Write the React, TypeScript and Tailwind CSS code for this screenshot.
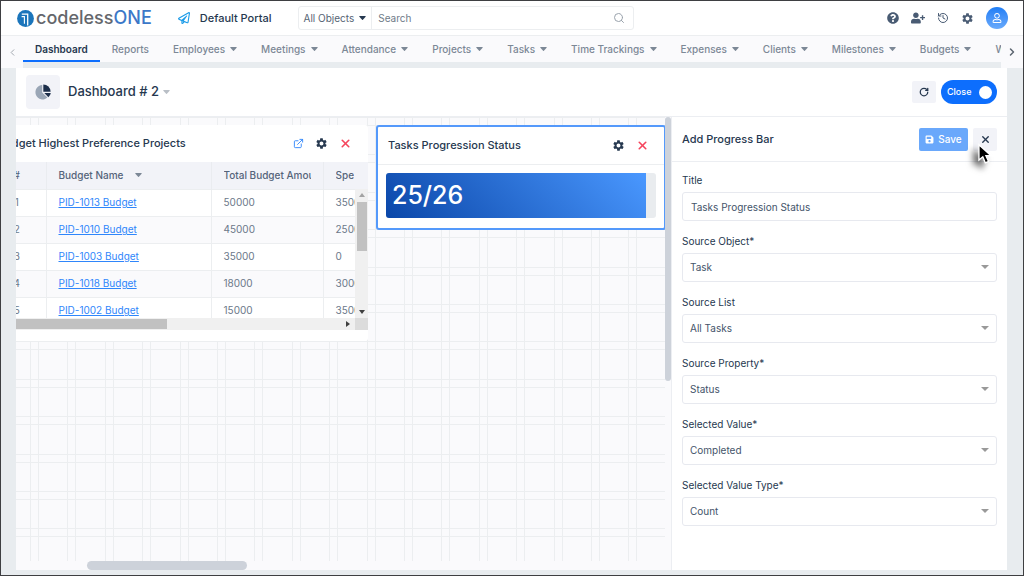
import { useState } from "react"
import type { ReactNode } from "react"
import { FaQuestionCircle, FaRegPaperPlane, FaRegUser, FaSave, FaUserPlus } from "react-icons/fa"
import { FiExternalLink } from "react-icons/fi"
import { MdSettings } from "react-icons/md"
import { ChevronLeft, ChevronRight, History, RotateCw, Search, X } from "lucide-react"

const tabs = [
    { name: "Reports", menu: false },
    { name: "Employees", menu: true },
    { name: "Meetings", menu: true },
    { name: "Attendance", menu: true },
    { name: "Projects", menu: true },
    { name: "Tasks", menu: true },
    { name: "Time Trackings", menu: true },
    { name: "Expenses", menu: true },
    { name: "Clients", menu: true },
    { name: "Milestones", menu: true },
    { name: "Budgets", menu: true },
    { name: "Work Logs", menu: true },
]

const budgets = [
    { name: "PID-1013 Budget", total: 50000, spent: 35000 },
    { name: "PID-1010 Budget", total: 45000, spent: 25000 },
    { name: "PID-1003 Budget", total: 35000, spent: 0 },
    { name: "PID-1018 Budget", total: 18000, spent: 30000 },
    { name: "PID-1002 Budget", total: 15000, spent: 35000 },
]

const selects = [
    { id: "sourceObject", label: "Source Object*", value: "Task" },
    { id: "sourceList", label: "Source List", value: "All Tasks" },
    { id: "sourceProperty", label: "Source Property*", value: "Status" },
    { id: "selectedValue", label: "Selected Value*", value: "Completed" },
    { id: "valueType", label: "Selected Value Type*", value: "Count" },
]

function Caret({ className = "" }: { className?: string }) {
    return (
        <svg viewBox="0 0 7 4" className={`h-1 w-[7px] shrink-0 ${className}`}>
            <path d="M0.6 0H6.4Q7 0.2 6.6 0.7L3.9 3.7Q3.5 4.1 3.1 3.7L0.4 0.7Q0 0.2 0.6 0Z" fill="currentColor" />
        </svg>
    )
}

function Logo() {
    return (
        <a href="#" className="flex items-center gap-0.5" aria-label="codelessONE">
            <svg viewBox="0 0 17 17" className="h-[17px] w-[17px]">
                <circle cx="8.5" cy="8.5" r="8.4" fill="#1b75bb" />
                <path d="M4.6 6.6H7.4V13.8" fill="none" stroke="#fff" strokeWidth="1.1" />
                <path d="M4.8 4.2H10.7V15.4" fill="none" stroke="#fff" strokeWidth="1.3" />
            </svg>
            <span className="text-[18px] font-medium leading-5 text-[#65676c]">codeless<span className="text-[#3c78c8]">ONE</span></span>
        </a>
    )
}

function Header() {
    return (
        <header className="flex h-[35px] items-center border-b border-[#eceef0] bg-white pl-4 pr-[15px]">
            <Logo />
            <div className="ml-[26px] flex items-center gap-2.5 text-[11px] font-medium text-[#26384f]">
                <FaRegPaperPlane size={12} className="text-[#1b9be8]" />
                Default Portal
            </div>
            <form className="ml-[26px] flex h-6 w-[336px] items-center rounded-[3px] border border-[#eceef0]">
                <button type="button" className="flex h-full items-center gap-[5px] border-r border-[#eceef0] px-[5px] text-[10px] text-[#566474]">
                    All Objects <Caret className="text-[#26384f]" />
                </button>
                <input aria-label="Search" placeholder="Search" className="min-w-0 flex-1 px-1.5 text-[10px] outline-none placeholder:text-[#6f7b88]" />
                <Search size={12} className="mr-2 text-[#9aa3ad]" />
            </form>
            <div className="ml-auto flex items-center gap-3 text-[#495b73]">
                <button aria-label="Help"><FaQuestionCircle size={12} /></button>
                <button aria-label="Invite"><FaUserPlus size={14} /></button>
                <button aria-label="History"><History size={12} /></button>
                <button aria-label="Settings"><MdSettings size={13} /></button>
                <button aria-label="Account" className="flex h-[22px] w-[22px] items-center justify-center rounded-full bg-linear-to-b from-[#1d7df5] to-[#69aafb] text-white">
                    <FaRegUser size={10} />
                </button>
            </div>
        </header>
    )
}

function TabBar() {
    return (
        <nav className="flex h-8 bg-[#fafafc]">
            <button aria-label="Scroll left" className="flex w-[22px] shrink-0 items-center justify-center text-[#9aa1a9]"><ChevronLeft size={11} /></button>
            <div className="min-w-0 flex-1 overflow-hidden bg-[#e8ecef]">
                <div className="flex h-[26px] bg-[#fafafc] text-[10px] font-medium text-[#7c8896]">
                    <a href="#" className="flex items-center border-b-2 border-[#0d6efd] px-3 pt-0.5 font-semibold text-[#26384f]">Dashboard</a>
                    {tabs.map((tab) => (
                        <a href="#" key={tab.name} className="flex shrink-0 items-center gap-[5px] whitespace-nowrap px-3">
                            {tab.name}
                            {tab.menu && <Caret />}
                        </a>
                    ))}
                </div>
            </div>
            <button aria-label="Scroll right" className="flex w-[22px] shrink-0 items-center justify-center text-[#5c6570]"><ChevronRight size={12} strokeWidth={3} /></button>
        </nav>
    )
}

function DashboardBar() {
    const [editing, setEditing] = useState(true)

    return (
        <div className="flex h-[49px] shrink-0 items-center border-b border-[#eceef2] bg-white px-2.5">
            <div className="flex h-[34px] w-[34px] items-center justify-center rounded-[4px] bg-[#f2f3f8]">
                <svg viewBox="0 0 16 16" className="h-4 w-4">
                    <path d="M7.2 1A7.2 7.2 0 1 0 12.4 13.6L7.2 8.4Z" fill="#9aa6b6" />
                    <path d="M8.3 0.4A7.4 7.4 0 0 1 15.6 7.7H8.3Z" fill="#1d2f4b" />
                    <path d="M9.3 9H15.8A7 7 0 0 1 13.4 13.2Z" fill="#1d2f4b" />
                </svg>
            </div>
            <button className="ml-2 flex items-center gap-1 text-[13px] font-medium text-[#26384f]">
                Dashboard # 2 <Caret className="text-[#b9bfc6]" />
            </button>
            <button aria-label="Refresh" className="ml-auto flex h-[22px] w-6 items-center justify-center rounded-[2px] bg-[#f2f3f8] text-[#26384f]"><RotateCw size={10} strokeWidth={3} /></button>
            <label className="ml-[5px] flex h-6 w-14 cursor-pointer items-center justify-between rounded-full bg-[#0d6efd] pl-1.5 pr-[5px] text-[9px] font-medium text-white">
                Close
                <input type="checkbox" checked={editing} onChange={() => setEditing(!editing)} className="h-[13px] w-[13px] appearance-none rounded-full bg-white" />
            </label>
        </div>
    )
}

// double lines where the margins of neighbouring grid cells meet
function CanvasGrid() {
    const starts = Array.from({ length: 60 }, (_, i) => Math.round((i * 187) / 5))

    return (
        <svg className="absolute inset-0 h-full w-full" stroke="#eceef0" shapeRendering="crispEdges">
            {starts.map((s) => (
                <g key={s}>
                    <path d={`M${s + 14.5} 0V4000M${s + 22.5} 0V4000`} />
                    <path d={`M0 ${s + 0.5}H4000M0 ${s + 8.5}H4000`} />
                </g>
            ))}
        </svg>
    )
}

function CardHeader({ title, children }: { title: string; children: ReactNode }) {
    return (
        <div className="flex h-[37px] items-center justify-between pl-2.5 text-[#26384f]">
            <h2 className="text-[11px] font-medium">{title}</h2>
            <div className="flex items-center gap-[11px]">{children}</div>
        </div>
    )
}

function BudgetCard() {
    return (
        <section className="relative h-[216px] w-[380px] shrink-0 overflow-hidden rounded-[3px] bg-white">
            <div className="pr-4">
                <CardHeader title="Budget Highest Preference Projects">
                    <button aria-label="Open" className="text-[#2f86fb]"><FiExternalLink size={11} /></button>
                    <button aria-label="Configure"><MdSettings size={13} /></button>
                    <button aria-label="Remove" className="text-[#f5455c]"><X size={13} strokeWidth={3} /></button>
                </CardHeader>
            </div>
            <div className="h-[156px] overflow-hidden bg-[#f2f3f8]">
                <table className="w-[460px] table-fixed border-collapse text-[10px] text-[#6b7889]">
                    <colgroup>
                        <col className="w-[58px]" />
                        <col className="w-[165px]" />
                        <col className="w-[112px]" />
                        <col />
                    </colgroup>
                    <thead>
                        <tr className="h-[27px] bg-[#f2f3f8] text-left text-[#55647a]">
                            <th className="border-r border-[#eaecf0] text-center font-medium">#</th>
                            <th className="border-r border-[#eaecf0] px-3 font-medium">
                                <span className="flex items-center gap-3">Budget Name <Caret className="text-[#7c8896]" /></span>
                            </th>
                            <th className="border-r border-[#eaecf0] px-3 font-medium"><div className="overflow-hidden whitespace-nowrap">Total Budget Amount</div></th>
                            <th className="px-3 font-medium"><div className="w-[18px] overflow-hidden">Spent</div></th>
                        </tr>
                    </thead>
                    <tbody>
                        {budgets.map((b, i) => (
                            <tr key={b.name} className="h-[27px] border-t border-[#eceef0] bg-white even:bg-[#fafafc]">
                                <td className="border-r border-[#eceef0] text-center">{i + 1}</td>
                                <td className="border-r border-[#eceef0] px-3"><a href="#" className="text-[#2f86fb] underline">{b.name}</a></td>
                                <td className="border-r border-[#eceef0] px-3">{b.total}</td>
                                <td className="px-3">{b.spent}</td>
                            </tr>
                        ))}
                    </tbody>
                </table>
            </div>
            <div className="flex h-3 bg-[#f0f0f0]">
                <div className="my-px w-[179px] bg-[#c1c1c1]" />
                <div className="ml-auto flex w-3 items-center justify-center text-[#404040]">
                    <svg viewBox="0 0 4 6" className="h-1.5 w-1"><path d="M0 0L4 3L0 6Z" fill="currentColor" /></svg>
                </div>
                <div className="ml-px w-[13px] bg-[#dcdcdc]" />
            </div>
            <div className="absolute right-0 top-16 flex h-[129px] w-[13px] flex-col items-center bg-[#f0f0f0] py-1">
                <svg viewBox="0 0 6 4" className="h-1 w-1.5"><path d="M0 4L3 0L6 4Z" fill="#a3a3a3" /></svg>
                <div className="mt-[5px] h-[49px] w-2.5 bg-[#c1c1c1]" />
                <svg viewBox="0 0 6 4" className="mt-auto h-1 w-1.5"><path d="M0 0L3 4L6 0Z" fill="#404040" /></svg>
            </div>
        </section>
    )
}

function ProgressCard({ title, done, total }: { title: string; done: number; total: number }) {
    return (
        <section className="h-[105px] w-[290px] shrink-0 rounded-[3px] border-2 border-[#5499fb] bg-white">
            <div className="border-b border-[#eceef0] pr-[15px]">
                <CardHeader title={title}>
                    <button aria-label="Configure"><MdSettings size={13} /></button>
                    <button aria-label="Remove" className="text-[#f5455c]"><X size={13} strokeWidth={3} /></button>
                </CardHeader>
            </div>
            <div className="px-2 pt-2">
                <div role="progressbar" aria-valuenow={done} aria-valuemax={total} className="h-[45px] overflow-hidden rounded-[3px] bg-[#e9ecef]">
                    <div
                        className="flex h-full items-center bg-linear-45 from-[#0a47a9] to-[#4a98ff] pl-1.5 text-[25px] font-medium text-white"
                        style={{ width: `${(done / total) * 100}%` }}
                    >
                        {done}/{total}
                    </div>
                </div>
            </div>
        </section>
    )
}

function Canvas({ title }: { title: string }) {
    return (
        <div className="flex min-w-0 flex-1 bg-[#fafafc]">
            <div className="flex min-w-0 flex-1 flex-col">
                <div className="relative flex-1 overflow-hidden">
                    <CanvasGrid />
                    <div className="relative -ml-7 flex items-start gap-2 pt-2">
                        <BudgetCard />
                        <ProgressCard title={title} done={25} total={26} />
                    </div>
                </div>
                <div className="h-[9px]">
                    <div className="ml-[71px] h-full w-40 rounded-full bg-[#cdd2da]" />
                </div>
            </div>
            <div className="w-1.5">
                <div className="h-[264px] rounded-full bg-[#cdd2da]" />
            </div>
        </div>
    )
}

function ProgressForm({ title, setTitle }: { title: string; setTitle: (t: string) => void }) {
    return (
        <form className="w-[336px] shrink-0 border-l border-[#eceef2] bg-white text-[#26384f]">
            <div className="relative flex h-[45px] items-center border-b border-[#eceef2] px-2.5">
                <h2 className="text-[11px] font-medium">Add Progress Bar</h2>
                <button type="button" className="ml-auto flex h-[23px] w-[49px] items-center justify-center gap-1 rounded-[2px] bg-[#6aa8fb] text-[10px] font-medium text-white">
                    <FaSave size={9} /> Save
                </button>
                <button type="button" aria-label="Close" className="ml-[5px] flex h-[23px] w-6 items-center justify-center rounded-[2px] bg-[#f2f3f8]"><X size={11} strokeWidth={3} /></button>
                <svg viewBox="0 0 14 20" className="pointer-events-none absolute right-3.5 top-[26px] h-[22px] w-4 drop-shadow-[-5px_5px_3px_rgba(0,0,0,0.6)]">
                    <path d="M1.5 1.5V15.5L5 12.5L7.3 18L10.2 16.8L7.8 11.5H12.5Z" fill="#000" stroke="#fff" strokeWidth="1.2" />
                </svg>
            </div>
            <div className="flex flex-col gap-3 px-2.5 pt-2.5 text-[10px]">
                <div>
                    <label htmlFor="title" className="block h-5 leading-4">Title</label>
                    <input id="title" value={title} onChange={(e) => setTitle(e.target.value)} className="block h-[29px] w-full rounded-[3px] border border-[#e7e9ef] px-2 text-[#44546a] outline-none" />
                </div>
                {selects.map((s) => (
                    <div key={s.id}>
                        <label htmlFor={s.id} className="block h-5 leading-4">{s.label}</label>
                        <div className="relative">
                            <select id={s.id} className="block h-[29px] w-full appearance-none rounded-[3px] border border-[#e7e9ef] px-[7px] text-[#44546a] outline-none">
                                <option>{s.value}</option>
                            </select>
                            <svg viewBox="0 0 8 4" className="pointer-events-none absolute right-2 top-3 h-1 w-2"><path d="M0 0H8L4 4Z" fill="#999" /></svg>
                        </div>
                    </div>
                ))}
            </div>
        </form>
    )
}

export default function App() {
    const [title, setTitle] = useState("Tasks Progression Status")

    return (
        <div className="flex h-screen flex-col overflow-hidden border border-[#3e3f42] bg-[#e8ecef] font-['Inter',sans-serif]">
            <Header />
            <TabBar />
            <main className="mb-[5px] ml-[15px] mr-4 flex min-h-0 flex-1 flex-col overflow-hidden">
                <DashboardBar />
                <div className="flex min-h-0 flex-1">
                    <Canvas title={title} />
                    <ProgressForm title={title} setTitle={setTitle} />
                </div>
            </main>
        </div>
    )
}
